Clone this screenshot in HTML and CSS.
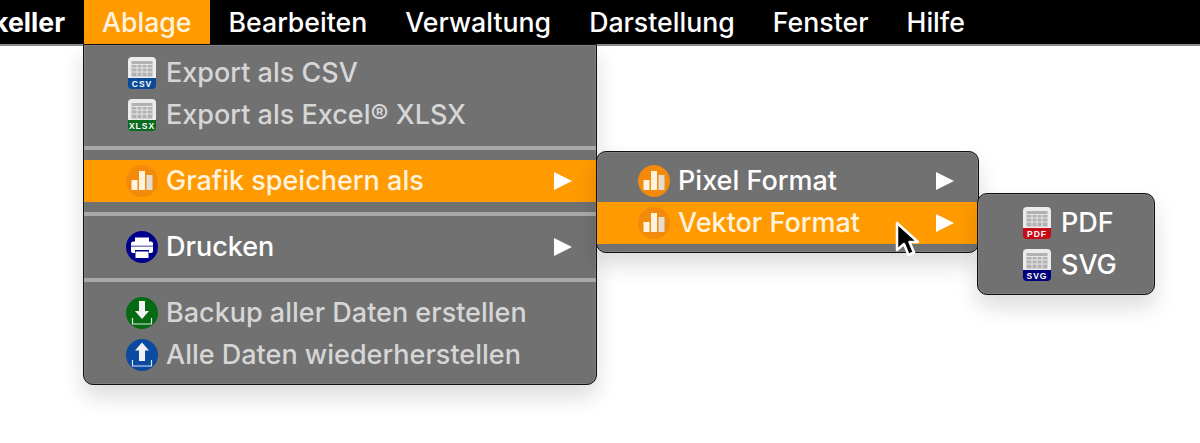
FILE: index.html
```html
<!DOCTYPE html>
<html lang="de">
<head>
    <meta charset="UTF-8">
    <title>Ablage Menu</title>
    <link rel="stylesheet" href="styles.css">
</head>
<body>

<!-- shared icon shapes -->
<svg class="defs" width="0" height="0">
    <defs>
        <g id="sheet">
            <path d="M0 4a4 4 0 0 1 4-4h20a4 4 0 0 1 4 4v18H0z" fill="#ececec"/>
            <rect x="3.500" y="4" width="21" height="15.500" fill="#b2b2b2"/>
            <path d="M3.500 7.500h21M3.500 11h21M3.500 15h21M9 7.500v12M14 7.500v12M19 7.500v12" stroke="#e6e6e6" stroke-width="1"/>
        </g>
        <g id="bars">
            <rect x="5.500" y="15" width="6" height="10" fill="#fff3df"/>
            <rect x="13" y="6" width="6" height="19" fill="#fff3df"/>
            <rect x="20.500" y="10" width="6" height="15" fill="#e2dcd2"/>
        </g>
    </defs>
</svg>

<nav class="menubar">
    <span class="menubar-item app-name">keller</span>
    <span class="menubar-item active">Ablage</span>
    <span class="menubar-item">Bearbeiten</span>
    <span class="menubar-item">Verwaltung</span>
    <span class="menubar-item">Darstellung</span>
    <span class="menubar-item">Fenster</span>
    <span class="menubar-item">Hilfe</span>
</nav>

<div class="menu main-menu">
    <div class="row disabled">
        <svg class="icon" viewBox="0 0 28 32"><use href="#sheet"/><path d="M0 21h28v7a4 4 0 0 1-4 4H4a4 4 0 0 1-4-4z" fill="#0a4a96"/><text class="icon-label" x="14" y="30">CSV</text></svg>
        <span>Export als CSV</span>
    </div>
    <div class="row disabled">
        <svg class="icon" viewBox="0 0 28 32"><use href="#sheet"/><path d="M0 21h28v7a4 4 0 0 1-4 4H4a4 4 0 0 1-4-4z" fill="#0a6a1e"/><text class="icon-label" x="14" y="30">XLSX</text></svg>
        <span>Export als Excel® XLSX</span>
    </div>
    <div class="separator"></div>
    <div class="row selected">
        <svg class="icon round" viewBox="0 0 32 32"><circle cx="16" cy="16" r="16" fill="#f28a0c"/><use href="#bars"/></svg>
        <span>Grafik speichern als</span>
        <i class="arrow"></i>
    </div>
    <div class="separator"></div>
    <div class="row">
        <svg class="icon round" viewBox="0 0 32 32">
            <circle cx="16" cy="16" r="16" fill="#00008c"/>
            <path d="M9 6.500h14v4h2a2 2 0 0 1 2 2V20a2 2 0 0 1-2 2h-2v-3H9v3H7a2 2 0 0 1-2-2v-7.500a2 2 0 0 1 2-2h2z" fill="#fff"/>
            <rect x="9.500" y="20.500" width="13" height="6.500" fill="#fff"/>
            <rect x="5" y="14.500" width="22" height="1.500" fill="#7f7fc5"/>
        </svg>
        <span class="strong">Drucken</span>
        <i class="arrow"></i>
    </div>
    <div class="separator"></div>
    <div class="row disabled">
        <svg class="icon round" viewBox="0 0 32 32">
            <circle cx="16" cy="16" r="16" fill="#046b12"/>
            <path d="M13 4h6v10h4l-7 8-7-8h4z" fill="#f2f2f2"/>
            <path d="M6.500 21v6h19v-6" fill="none" stroke="#dfe9df" stroke-width="1.200"/>
        </svg>
        <span>Backup aller Daten erstellen</span>
    </div>
    <div class="row disabled">
        <svg class="icon round" viewBox="0 0 32 32">
            <circle cx="16" cy="16" r="16" fill="#0a4aa0"/>
            <path d="M16 3.500l7 8h-4V22h-6V11.500H9z" fill="#f2f2f2"/>
            <path d="M6.500 21v6h19v-6" fill="none" stroke="#dfe5ef" stroke-width="1.200"/>
        </svg>
        <span>Alle Daten wiederherstellen</span>
    </div>
</div>

<div class="menu sub-menu">
    <div class="row">
        <svg class="icon round" viewBox="0 0 32 32"><circle cx="16" cy="16" r="16" fill="#f28a0c"/><use href="#bars"/></svg>
        <span class="strong">Pixel Format</span>
        <i class="arrow"></i>
    </div>
    <div class="row selected">
        <svg class="icon round" viewBox="0 0 32 32"><circle cx="16" cy="16" r="16" fill="#f28a0c"/><use href="#bars"/></svg>
        <span>Vektor Format</span>
        <i class="arrow"></i>
    </div>
</div>

<div class="menu format-menu">
    <div class="row">
        <svg class="icon" viewBox="0 0 28 32"><use href="#sheet"/><path d="M0 21h28v7a4 4 0 0 1-4 4H4a4 4 0 0 1-4-4z" fill="#c80a14"/><text class="icon-label" x="14" y="30">PDF</text></svg>
        <span class="strong">PDF</span>
    </div>
    <div class="row">
        <svg class="icon" viewBox="0 0 28 32"><use href="#sheet"/><path d="M0 21h28v7a4 4 0 0 1-4 4H4a4 4 0 0 1-4-4z" fill="#00007a"/><text class="icon-label" x="14" y="30">SVG</text></svg>
        <span class="strong">SVG</span>
    </div>
</div>

<!-- mouse pointer -->
<svg class="pointer" viewBox="0 0 24 38" width="24" height="38">
    <path d="M2 2v27l7-6 4.500 11 5.500-2.500-4.500-10.500H23z" fill="#000" stroke="#fff" stroke-width="2.500" stroke-linejoin="round"/>
</svg>

</body>
</html>
```

FILE: styles.css
```css
body {
    margin: 0;
    height: 443px;
    overflow: hidden;
    background-color: #ffffff;
    font-family: Inter, "Noto Sans", sans-serif;
    font-size: 27px;
    font-weight: 450;
}

.defs {
    position: absolute;
}

/* Menu bar */
.menubar {
    display: flex;
    height: 44px;
    overflow: hidden;
    background-color: #000000;
    border-bottom: 2px solid #8c8c8c;
    color: #ffffff;
    font-size: 26.700px;
}

.menubar-item {
    padding: 0 19px;
    line-height: 44px;
    white-space: nowrap;
}

.app-name {
    flex: none;
    width: 91px;
    box-sizing: border-box;
    padding: 0 19px 0 0;
    margin-left: -7px;
    text-align: right;
    font-weight: 700;
}

.menubar-item.active {
    padding: 0 18px;
    background-color: #ff9a00;
    color: #fff3df;
}

/* Drop-down menus */
.menu {
    position: absolute;
    box-sizing: border-box;
    padding: 8px 0 7px;
    background-color: #717171;
    border: 1px solid #111111;
    border-radius: 10px;
    box-shadow: 0 12px 22px rgba(0, 0, 0, 0.14), inset 0 0 0 1px rgba(255, 255, 255, 0.1);
    color: #ffffff;
}

.main-menu {
    left: 83px;
    top: 44px;
    width: 514px;
    height: 341px;
    padding-top: 7px;
    border-radius: 0 0 10px 10px;
}

.sub-menu {
    left: 596px;
    top: 151px;
    width: 383px;
    height: 102px;
}

.format-menu {
    left: 977px;
    top: 193px;
    width: 178px;
    height: 102px;
}

.row {
    display: flex;
    align-items: center;
    height: 42px;
    padding: 0 24px 0 42px;
    white-space: nowrap;
}

.row span {
    margin-bottom: 1px;
}

.row .arrow {
    margin-left: auto;
}

.row.disabled {
    color: #d6d6d6;
}

.row.selected {
    background-color: #ff9a00;
    color: #fff3df;
}

.strong {
    font-weight: 550;
}

.separator {
    height: 4px;
    margin: 10px 0;
    background-color: #a9a9a9;
}

.icon {
    flex: none;
    width: 28px;
    height: 32px;
    margin: 0 10px 0 2px;
}

.icon.round {
    width: 32px;
    margin: 0 8px 0 0;
}

.icon-label {
    font-family: "Liberation Sans", sans-serif;
    font-size: 8.500px;
    font-weight: 700;
    letter-spacing: 1px;
    text-anchor: middle;
    fill: #ffffff;
}

.arrow {
    width: 0;
    height: 0;
    border-left: 18px solid #ffffff;
    border-top: 9px solid transparent;
    border-bottom: 9px solid transparent;
}

.sub-menu .row {
    padding-left: 41px;
}

.format-menu .row {
    padding-left: 43px;
}

.pointer {
    position: absolute;
    left: 895px;
    top: 221px;
}
```
